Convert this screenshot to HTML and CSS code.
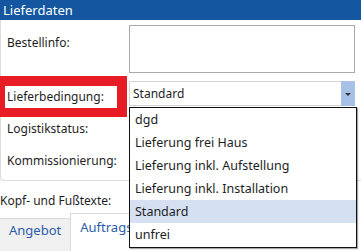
FILE: index.html
```html
<!DOCTYPE html>
<html>
	<head>
		<title>Lieferdaten</title>
		<link rel="stylesheet" href="styles.css">
	</head>
	<body>
		<div id="header">Lieferdaten</div>
		<div id="panel">
			<div class="row row_info">
				<div class="label">Bestellinfo:</div>
				<div class="info_box"></div>
			</div>
			<div class="row row_select">
				<div class="label">Lieferbedingung:</div>
				<div class="flag"></div>
				<div class="select">
					<span class="select_text">Standard</span>
					<span class="select_arrow"></span>
				</div>
				<ul class="dropdown">
					<li>dgd</li>
					<li>Lieferung frei Haus</li>
					<li>Lieferung inkl. Aufstellung</li>
					<li>Lieferung inkl. Installation</li>
					<li class="selected">Standard</li>
					<li>unfrei</li>
				</ul>
			</div>
			<div class="row row_plain">
				<div class="label">Logistikstatus:</div>
			</div>
			<div class="row row_plain">
				<div class="label">Kommissionierung:</div>
			</div>
		</div>
		<div id="texts_title">Kopf- und Fußtexte:</div>
		<div id="tabs">
			<div class="tab">Angebot</div>
			<div class="tab tab_active">Auftragsbestätigung</div>
		</div>
	</body>
</html>
```

FILE: styles.css
```css
body
{
	margin:0;
	background:#ffffff;
	font-family:"Noto Sans", "Open Sans", sans-serif;
	font-size:12px;
	color:#1e1e1e;
	overflow:hidden;
}
#header
{
	height:20px;
	line-height:20px;
	padding-left:3px;
	font-size:13px;
	background:#1457a0;
	color:#ffffff;
}
/*=============================*/
#panel
{
	border-left:1px solid #dcdcdc;
	border-bottom:1px solid #dcdcdc;
	border-bottom-left-radius:4px;
	padding:5px 0 4px 0;
}
.row
{
	display:grid;
	grid-template-columns:128px 226px;
}
.label
{
	padding-left:6px;
	line-height:17px;
}
.row_info .label
{
	padding-top:9px;
}
.info_box
{
	height:46px;
	border:1px solid #ababab;
}
/*=============================*/
.row_select
{
	position:relative;
	margin-top:8px;
	height:25px;
}
.row_select .label
{
	padding-top:7px;
	position:relative;
	z-index:2;
}
.flag
{
	position:absolute;
	left:-1px;
	top:-5px;
	width:112px;
	height:22px;
	border-style:solid;
	border-color:#e81c24;
	border-width:10px 10px 9px 5px;
}
.select
{
	display:flex;
	height:23px;
	border:1px solid #d4d4d4;
	border-right-color:#ababab;
}
.select_text
{
	flex:1;
	padding-left:3px;
	line-height:23px;
}
.select_arrow
{
	width:14px;
	margin:-1px -1px -1px 0;
	background:#a7c0e5;
	position:relative;
}
.select_arrow::after
{
	content:"";
	position:absolute;
	left:4px;
	top:12px;
	border-left:3px solid transparent;
	border-right:3px solid transparent;
	border-top:3px solid #333333;
}
.dropdown
{
	position:absolute;
	left:128px;
	top:26px;
	width:226px;
	margin:0;
	padding:0 0 1px 0;
	list-style:none;
	background:#ffffff;
	border:1px solid #111111;
	box-shadow:1px 1px 1px rgba(0,0,0,0.35);
	z-index:5;
}
.dropdown li
{
	height:23px;
	line-height:23px;
	padding-left:5px;
	font-size:12.5px;
}
.dropdown .selected
{
	background:#d5e1f2;
}
/*=============================*/
.row_plain
{
	height:32px;
	align-items:center;
}
.row_select + .row_plain
{
	margin-top:6px;
}
/*=============================*/
#texts_title
{
	margin-top:11px;
	line-height:17px;
}
#tabs
{
	display:flex;
	align-items:flex-end;
	margin-top:4px;
	width:129px;
	height:38px;
	overflow:hidden;
	white-space:nowrap;
}
.tab
{
	height:32px;
	padding:0 9px;
	line-height:22px;
	color:#2a5caa;
	font-size:13px;
	background:#f0f0f0;
	border-top:1px solid #dadada;
	border-right:1px solid #dadada;
}
.tab_active
{
	height:37px;
	line-height:26px;
	background:#ffffff;
	border-left:1px solid #dadada;
	border-right:none;
	margin-left:-1px;
}
```
